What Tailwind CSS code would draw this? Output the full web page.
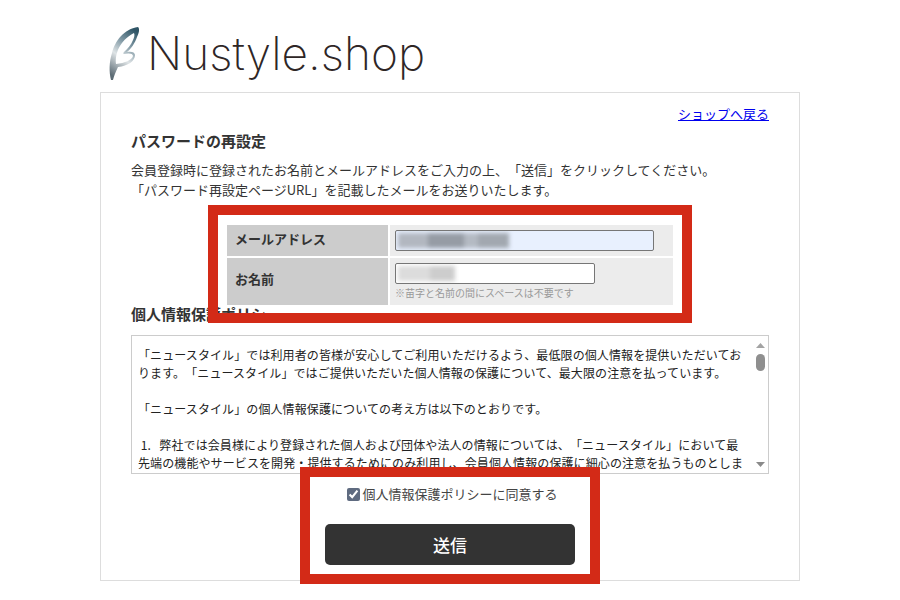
<!DOCTYPE html>
<html lang="ja">
<head>
    <meta charset="UTF-8">
    <title>パスワードの再設定 | Nustyle.shop</title>
    <script src="https://cdn.jsdelivr.net/npm/@tailwindcss/browser@4"></script>
</head>
<body class="bg-white text-[#333] font-['Noto_Sans_CJK_JP','Noto_Sans',sans-serif] text-[13px] [text-spacing-trim:space-all] relative h-[600px] overflow-hidden">

<!-- Logo -->
<header class="w-[700px] mx-auto h-[92px] flex items-start pl-[9px] pt-[26px] gap-[6px]">
    <svg width="32" height="56" viewBox="0 0 32 56" class="shrink-0">
        <defs>
            <linearGradient id="beta" x1="0.7" y1="0" x2="0.3" y2="1">
                <stop offset="0" stop-color="#2f5566"/>
                <stop offset="0.3" stop-color="#7d96a2"/>
                <stop offset="0.6" stop-color="#dfe4e6"/>
                <stop offset="1" stop-color="#5d6c75"/>
            </linearGradient>
        </defs>
        <path fill="url(#beta)" fill-rule="evenodd" d="M2 54C0 46 0 36 3 27C6 15 15 3 29 1C31 3 30 7 28 11C26 17 22 23 18 26C22 25 26 26 26 29C26 35 19 40 9 41C7 45 5 50 4 54ZM7 38C16 37 23 34 24 30C24 27 19 27 15 28C14 28 14 27 15 26C19 22 22 19 24 14C25 12 26 9 25 7C10 15 6 28 7 38Z"/>
    </svg>
    <span class="font-['Inter',sans-serif] font-extralight text-[#2e2626] text-[46px] leading-[60px] -mt-[3px]">Nustyle.shop</span>
</header>

<!-- Card -->
<main class="w-[700px] h-[489px] mx-auto border border-[#ddd] px-[30px] pt-[11px]">
    <div class="text-right leading-[19px]">
        <a href="#" class="text-[#0000ee] underline">ショップへ戻る</a>
    </div>
    <h2 class="text-[15px] font-bold leading-[20px] mt-[8px]">パスワードの再設定</h2>
    <p class="leading-[20px] mt-[9px]">会員登録時に登録されたお名前とメールアドレスをご入力の上、「送信」をクリックしてください。<br>「パスワード再設定ページURL」を記載したメールをお送りいたします。</p>

    <!-- Form table -->
    <div class="w-[446px] mx-auto mt-[25px] grid grid-cols-[161px_283px] gap-[2px]">
        <div class="bg-[#ccc] font-bold flex items-center pl-[8px] pb-[3px] h-[31px]">メールアドレス</div>
        <div class="bg-[#ececec] pl-[5px] pt-[5px]">
            <div class="w-[259px] h-[21px] bg-[#e8f0fe] border border-[#767676] rounded-[2px] overflow-hidden pl-[2px] pt-[2px]">
                <div class="flex w-[111px] h-[15px] blur-[2px]">
                    <div class="w-[30px] bg-[#b2b7c0]"></div>
                    <div class="w-[36px] bg-[#969ca5]"></div>
                    <div class="w-[14px] bg-[#b4bac3]"></div>
                    <div class="w-[31px] bg-[#a2a8b0]"></div>
                </div>
            </div>
        </div>
        <div class="bg-[#ccc] font-bold flex items-center pl-[8px] pb-[6px] h-[47px]">お名前</div>
        <div class="bg-[#ececec] pl-[5px] pt-[5px]">
            <div class="w-[200px] h-[21px] bg-white border border-[#767676] rounded-[2px] overflow-hidden pl-[2px] pt-[2px]">
                <div class="flex w-[57px] h-[15px] blur-[2px]">
                    <div class="w-[32px] bg-[#dcdcdc]"></div>
                    <div class="w-[25px] bg-[#cdcdcd]"></div>
                </div>
            </div>
            <p class="text-[10px] text-[#999] leading-[14px] mt-[2px]">※苗字と名前の間にスペースは不要です</p>
        </div>
    </div>

    <h2 class="text-[15px] font-bold leading-[20px] mt-[-1px]">個人情報保護ポリシー</h2>

    <!-- Policy box -->
    <div class="relative h-[139px] mt-[11px] border border-[#ccc] overflow-hidden pl-[6px] pt-[10px] text-[12px] tracking-[0.1px] leading-[18px] text-[#222] whitespace-nowrap">
        「ニュースタイル」では利用者の皆様が安心してご利用いただけるよう、最低限の個人情報を提供いただいてお<br>
        ります。「ニュースタイル」ではご提供いただいた個人情報の保護について、最大限の注意を払っています。<br>
        <br>
        「ニュースタイル」の個人情報保護についての考え方は以下のとおりです。<br>
        <br>
        &nbsp;1.&nbsp;&nbsp; 弊社では会員様により登録された個人および団体や法人の情報については、「ニュースタイル」において最<br>
        先端の機能やサービスを開発・提供するためにのみ利用し、会員個人情報の保護に細心の注意を払うものとしま
        <!-- Scrollbar -->
        <div class="absolute right-0 top-0 bottom-0 w-[15px] bg-white flex flex-col items-center justify-between pt-[7px] pb-[6px]">
            <svg width="9" height="5" viewBox="0 0 9 5"><path d="M4.5 0L9 5H0Z" fill="#a3a3a3"/></svg>
            <div class="absolute top-[18px] left-[3px] w-[9px] h-[17px] rounded-full bg-[#8f8f8f]"></div>
            <svg width="9" height="5" viewBox="0 0 9 5"><path d="M0 0H9L4.5 5Z" fill="#8a8a8a"/></svg>
        </div>
    </div>

    <!-- Agreement -->
    <label class="flex items-center justify-center gap-[2px] pl-[5px] mt-[11px] leading-[18px] text-[#444]">
        <input type="checkbox" checked class="w-[13px] h-[13px] accent-[#5f6b80] m-0">
        個人情報保護ポリシーに同意する
    </label>

    <button class="block w-[250px] h-[41px] mx-auto mt-[21px] bg-[#333] rounded-[5px] text-white text-[17px] font-medium">送信</button>
</main>

<!-- Red highlight frames -->
<div class="absolute left-[208px] top-[205px] w-[484px] h-[118px] border-[10px] border-[#d32a17]"></div>
<div class="absolute left-[300px] top-[467px] w-[300px] h-[117px] border-[10px] border-[#d32a17]"></div>

</body>
</html>
